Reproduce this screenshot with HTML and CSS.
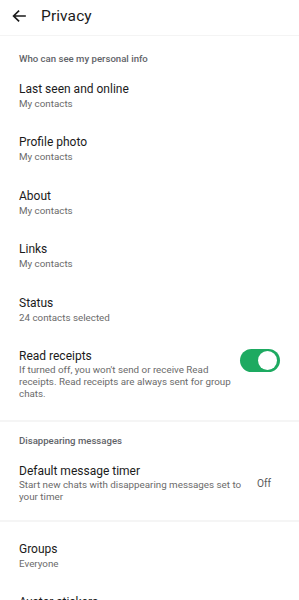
FILE: index.html
```html
<!DOCTYPE html>
<html>
<head>
<meta charset="utf-8">
<link rel="stylesheet" href="styles.css">
</head>
<body>
<div class="app">
  <header class="header">
    <svg class="back" width="14" height="12" viewBox="0 0 14 12"><path d="M13 6H2M6.5 1.2L1.6 6l4.9 4.8" fill="none" stroke="#1b1b1b" stroke-width="1.7" stroke-linecap="square"/></svg>
    <h1 class="title">Privacy</h1>
  </header>
  <section class="section first">
    <div class="label">Who can see my personal info</div>
    <div class="item"><div class="t">Last seen and online</div><div class="s">My contacts</div></div>
    <div class="item"><div class="t">Profile photo</div><div class="s">My contacts</div></div>
    <div class="item"><div class="t">About</div><div class="s">My contacts</div></div>
    <div class="item"><div class="t">Links</div><div class="s">My contacts</div></div>
    <div class="item"><div class="t">Status</div><div class="s">24 contacts selected</div></div>
    <div class="row rr">
      <div class="text"><div class="t">Read receipts</div><div class="d">If turned off, you won't send or receive Read receipts. Read receipts are always sent for group chats.</div></div>
      <div class="toggle"><div class="knob"></div></div>
    </div>
  </section>
  <section class="section second">
    <div class="label">Disappearing messages</div>
    <div class="row timer">
      <div class="text"><div class="t">Default message timer</div><div class="d">Start new chats with disappearing messages set to your timer</div></div>
      <div class="val">Off</div>
    </div>
  </section>
  <section class="section third">
    <div class="item"><div class="t">Groups</div><div class="s">Everyone</div></div>
    <div class="item"><div class="t">Avatar stickers</div><div class="s">Everyone</div></div>
  </section>
</div>
</body>
</html>
```
FILE: styles.css
```css
* { box-sizing: border-box; margin: 0; padding: 0; }
html, body { background: #fff; }
body { font-family: Roboto, "Noto Sans", sans-serif; color: #1b1b1b; overflow: hidden; }
.app { width: 299px; height: 600px; overflow: hidden; }
.header { height: 36px; display: flex; align-items: center; padding-left: 12px; border-bottom: 1px solid #f4f4f4; }
.back { display: block; margin-top: -3px; }
.title { font-size: 15.5px; font-weight: 400; margin-left: 15px; margin-top: -3px; letter-spacing: 0.1px; }
.section { border-bottom: 2px solid #f5f5f5; }
.section.third { border-bottom: none; }
.label { font-size: 9.6px; line-height: 14px; color: #5f6368; font-weight: 500; padding-left: 19px; }
.item { padding: 12.25px 19px; }
.t { font-size: 12px; line-height: 15px; color: #1b1b1b; }
.s { font-size: 9.8px; line-height: 14px; color: #6b6b6b; }
.d { font-size: 9.8px; line-height: 12px; color: #6b6b6b; margin-top: 0.5px; }
.row { display: flex; padding-left: 19px; }
.text { flex: 1; min-width: 0; }

.first { padding-top: 16px; padding-bottom: 20px; }
.first .label { margin-bottom: 3.25px; }
.rr { align-items: flex-start; padding-top: 11.75px; padding-right: 19px; }
.rr .text { padding-right: 8px; }
.toggle { width: 40px; height: 23px; border-radius: 12px; background: #1daa61; position: relative; flex: none; }
.knob { position: absolute; width: 19px; height: 19px; border-radius: 50%; background: #fff; right: 3px; top: 2px; }

.second { padding-top: 12px; padding-bottom: 17px; }
.timer { align-items: center; padding-top: 15.5px; padding-right: 28px; }
.timer .text { padding-right: 10px; }
.val { font-size: 10.2px; color: #5a5a5a; flex: none; }

.third { padding-top: 7.25px; }
```
